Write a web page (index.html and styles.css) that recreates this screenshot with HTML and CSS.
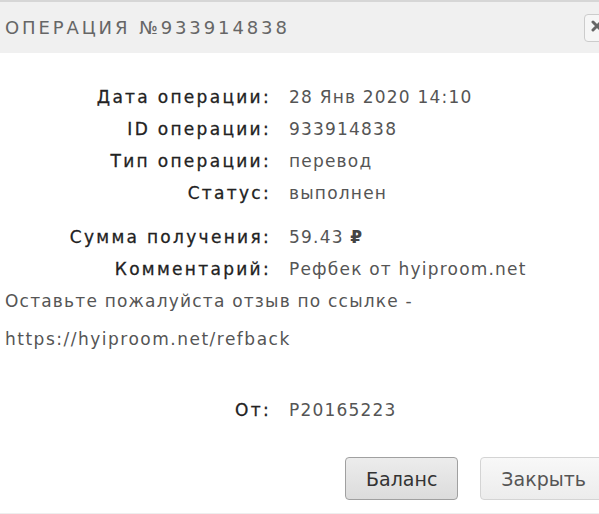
FILE: index.html
```html
<!DOCTYPE html>
<html lang="ru">
<head>
  <meta charset="UTF-8">
  <meta name="viewport" content="width=device-width, initial-scale=1.0">
  <title>Операция №933914838</title>
  <link rel="stylesheet" href="styles.css">
</head>
<body>
  <div class="dialog">
    <header class="dialog-head">
      <h1>Операция №933914838</h1>
      <button class="close-btn" aria-label="Закрыть">
        <svg width="12" height="12" viewBox="0 0 12 12"><path d="M2 2 L10 10 M10 2 L2 10" stroke="#666" stroke-width="3" stroke-linecap="round"/></svg>
      </button>
    </header>
    <main class="dialog-body">
      <div class="details">
        <div class="label">Дата операции:</div>
        <div class="value">28 Янв 2020 14:10</div>
        <div class="label">ID операции:</div>
        <div class="value">933914838</div>
        <div class="label">Тип операции:</div>
        <div class="value">перевод</div>
        <div class="label">Статус:</div>
        <div class="value">выполнен</div>
        <div class="label sum">Сумма получения:</div>
        <div class="value sum">59.43 <span class="rub">₽</span></div>
        <div class="label">Комментарий:</div>
        <div class="value">Рефбек от hyiproom.net</div>
      </div>
      <p class="comment">Оставьте пожалуйста отзыв по ссылке -</p>
      <p class="comment link">https://hyiproom.net/refback</p>
      <div class="details from">
        <div class="label">От:</div>
        <div class="value">P20165223</div>
      </div>
    </main>
    <footer class="dialog-foot">
      <button class="btn btn-main">Баланс</button>
      <button class="btn">Закрыть</button>
    </footer>
  </div>
</body>
</html>
```

FILE: styles.css
```css
body {
  margin: 0;
  background: #fff;
  font-family: "DejaVu Sans", sans-serif;
  color: #555;
  overflow: hidden;
}
.dialog {
  width: 599px;
  height: 514px;
  display: flex;
  flex-direction: column;
}
.dialog-head {
  display: flex;
  align-items: center;
  justify-content: space-between;
  height: 51px;
  background: #f0f0f0;
  border-top: 2px solid #d6d6d6;
  padding-left: 5px;
}
.dialog-head h1 {
  margin: 0;
  font-size: 18px;
  font-weight: normal;
  text-transform: uppercase;
  letter-spacing: 2.9px;
  color: #666;
}
.close-btn {
  width: 30px;
  height: 28px;
  margin-right: -15px;
  padding: 0 0 0 6px;
  text-align: left;
  border: 1px solid #ccc;
  border-radius: 4px;
  background: #f6f6f6;
}
.dialog-body {
  padding-top: 28px;
  flex: 1;
}
.details {
  display: grid;
  grid-template-columns: 271px 1fr;
  column-gap: 18px;
  font-size: 17px;
}
.label {
  text-align: right;
  color: #222;
  letter-spacing: 2.3px;
  line-height: 32px;
  -webkit-text-stroke: 0.3px #222;
}
.value {
  letter-spacing: 1.2px;
  line-height: 32px;
}
.sum {
  padding-top: 12px;
}
.rub {
  font-weight: bold;
  color: #444;
}
.comment {
  margin: 0;
  padding-left: 5px;
  font-size: 17px;
  letter-spacing: 1.2px;
  line-height: 32px;
}
.comment.link {
  padding-top: 3px;
  line-height: 38px;
  letter-spacing: 1.5px;
}
.details.from {
  margin-top: 36px;
}
.dialog-foot {
  display: flex;
  justify-content: flex-end;
  gap: 22px;
  padding: 0 0 13px;
  margin-right: -8px;
  border-bottom: 1px solid #eee;
}
.btn {
  height: 43px;
  padding: 0 20px;
  font-family: "DejaVu Sans", sans-serif;
  font-size: 19px;
  color: #555;
  background: linear-gradient(#f8f8f8, #ececec);
  border: 1px solid #d4d4d4;
  border-radius: 4px;
}
.btn-main {
  color: #333;
  background: linear-gradient(#ececec, #dcdcdc);
  border-color: #a0a0a0;
}
```
